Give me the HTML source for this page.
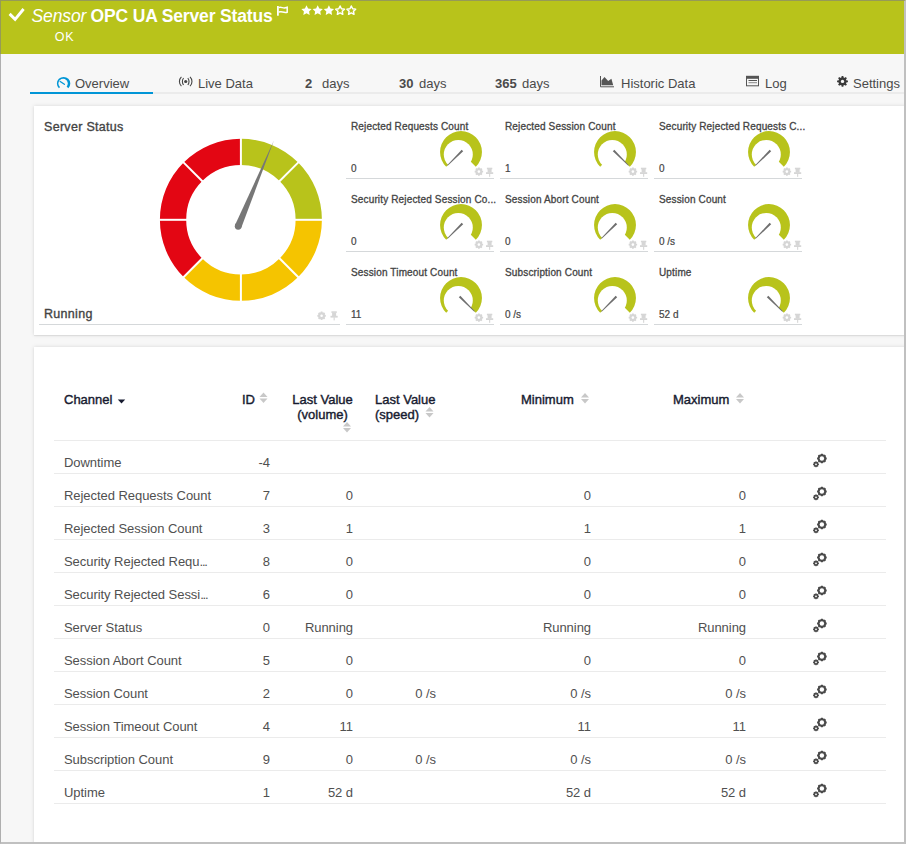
<!DOCTYPE html>
<html><head><meta charset="utf-8">
<style>
*{box-sizing:border-box;margin:0;padding:0}
html,body{width:906px;height:844px;overflow:hidden;background:#f7f7f7;font-family:"Liberation Sans",sans-serif}
.abs{position:absolute;white-space:nowrap}
#hdr{position:absolute;left:0;top:0;width:906px;height:54px;background:#b8c31b}
.w{color:#fff}
.tab{position:absolute;top:77px;font-size:13px;color:#4a4a4a;line-height:14px;white-space:nowrap}
#tabline{position:absolute;left:30px;top:92px;width:876px;height:2px;background:#ebebeb}
#tabsel{position:absolute;left:30px;top:92px;width:123px;height:2px;background:#0095d6}
.panel{position:absolute;background:#fff;box-shadow:0 0 4px rgba(0,0,0,0.13),0 1px 1px rgba(0,0,0,0.06)}
.gt{position:absolute;font-size:10px;color:#444;white-space:nowrap;line-height:12px;-webkit-text-stroke:0.3px #444;letter-spacing:0.15px}
.gv{position:absolute;font-size:10px;color:#444;white-space:nowrap;line-height:12px;-webkit-text-stroke:0.2px #444}
.st{position:absolute;font-size:12.5px;color:#444;white-space:nowrap;line-height:14px;-webkit-text-stroke:0.35px #444}
.th{position:absolute;font-size:13px;color:#171b30;line-height:15px;white-space:nowrap;-webkit-text-stroke:0.4px #171b30}
.td{position:absolute;font-size:13px;color:#505050;line-height:15px;white-space:nowrap;letter-spacing:-0.05px}
.r{text-align:right}
#bord{position:absolute;left:0;top:0;width:906px;height:844px;border-top:1px solid rgba(128,128,128,0.6);border-left:1px solid rgba(128,128,128,0.6);border-right:2px solid #c0c0c0;border-bottom:2px solid #c0c0c0;pointer-events:none}
</style></head><body>
<div id="hdr"></div>
<svg class="abs" style="left:0;top:0" width="30" height="30"><path d="M9.6 13.9L15.1 19.3L23.6 9" fill="none" stroke="#fff" stroke-width="2.9"/></svg>
<div class="abs w" style="left:31.5px;top:5px;font-size:17.5px;font-style:italic;line-height:22px;letter-spacing:-0.1px">Sensor</div>
<div class="abs w" style="left:90.5px;top:5px;font-size:17.5px;font-weight:bold;line-height:22px;letter-spacing:-0.15px">OPC UA Server Status</div>
<div class="abs w" style="left:54.8px;top:30px;font-size:12.5px;line-height:14px;letter-spacing:0.8px">OK</div>

<div id="tabline"></div><div id="tabsel"></div>
<div class="tab" style="left:75px">Overview</div>
<div class="tab" style="left:198px">Live Data</div>
<div class="tab" style="left:305px"><b>2</b></div><div class="tab" style="left:322px">days</div>
<div class="tab" style="left:399px"><b>30</b></div><div class="tab" style="left:419px">days</div>
<div class="tab" style="left:495px"><b>365</b></div><div class="tab" style="left:522px">days</div>
<div class="tab" style="left:621px">Historic Data</div>
<div class="tab" style="left:765px">Log</div>
<div class="tab" style="left:853px">Settings</div>

<div class="panel" style="left:34px;top:106px;width:880px;height:229px"></div>
<div class="panel" style="left:34px;top:347px;width:880px;height:520px"></div>
<div class="st" style="left:44px;top:120px;letter-spacing:0.3px">Server Status</div>
<div class="st" style="left:44px;top:307px;letter-spacing:0.3px">Running</div>
<svg class="abs" style="left:0;top:0" width="906" height="844"><path d="M240.9 138.8A81 81 0 0 1 298.18 162.52L279.58 181.12A54.7 54.7 0 0 0 240.9 165.1Z" fill="#b8c31b"/><path d="M298.18 162.52A81 81 0 0 1 321.9 219.8L295.6 219.8A54.7 54.7 0 0 0 279.58 181.12Z" fill="#b8c31b"/><path d="M321.9 219.8A81 81 0 0 1 298.18 277.08L279.58 258.48A54.7 54.7 0 0 0 295.6 219.8Z" fill="#f5c400"/><path d="M298.18 277.08A81 81 0 0 1 240.9 300.8L240.9 274.5A54.7 54.7 0 0 0 279.58 258.48Z" fill="#f5c400"/><path d="M240.9 300.8A81 81 0 0 1 183.62 277.08L202.22 258.48A54.7 54.7 0 0 0 240.9 274.5Z" fill="#f5c400"/><path d="M183.62 277.08A81 81 0 0 1 159.9 219.8L186.2 219.8A54.7 54.7 0 0 0 202.22 258.48Z" fill="#e30613"/><path d="M159.9 219.8A81 81 0 0 1 183.62 162.52L202.22 181.12A54.7 54.7 0 0 0 186.2 219.8Z" fill="#e30613"/><path d="M183.62 162.52A81 81 0 0 1 240.9 138.8L240.9 165.1A54.7 54.7 0 0 0 202.22 181.12Z" fill="#e30613"/><line x1="240.9" y1="167.1" x2="240.9" y2="136.8" stroke="#fff" stroke-width="2"/><line x1="278.16" y1="182.54" x2="299.59" y2="161.11" stroke="#fff" stroke-width="2"/><line x1="293.6" y1="219.8" x2="323.9" y2="219.8" stroke="#fff" stroke-width="2"/><line x1="278.16" y1="257.06" x2="299.59" y2="278.49" stroke="#fff" stroke-width="2"/><line x1="240.9" y1="272.5" x2="240.9" y2="302.8" stroke="#fff" stroke-width="2"/><line x1="203.64" y1="257.06" x2="182.21" y2="278.49" stroke="#fff" stroke-width="2"/><line x1="188.2" y1="219.8" x2="157.9" y2="219.8" stroke="#fff" stroke-width="2"/><line x1="203.64" y1="182.54" x2="182.21" y2="161.11" stroke="#fff" stroke-width="2"/><path d="M241.35 227.57L273.76 140.87L235.07 224.96Z" fill="#777"/><circle cx="238.21" cy="226.26" r="3.4" fill="#777"/><rect x="39" y="324" width="301" height="1" fill="#d5d8da"/><path d="M320.63 312.59L320.75 311.58L322.45 311.58L322.57 312.59L323.19 312.85L323.98 312.22L325.18 313.42L324.55 314.21L324.81 314.83L325.82 314.95L325.82 316.65L324.81 316.77L324.55 317.39L325.18 318.18L323.98 319.38L323.19 318.75L322.57 319.01L322.45 320.02L320.75 320.02L320.63 319.01L320.01 318.75L319.22 319.38L318.02 318.18L318.65 317.39L318.39 316.77L317.38 316.65L317.38 314.95L318.39 314.83L318.65 314.21L318.02 313.42L319.22 312.22L320.01 312.85Z" fill="#d6d6d6"/><circle cx="321.6" cy="315.8" r="3.35" fill="#d6d6d6"/><circle cx="321.6" cy="315.8" r="1.29" fill="#fff"/><rect x="331.4" y="311.3" width="5.4" height="1.6" fill="#d6d6d6"/><rect x="332.1" y="312.6" width="4" height="3.6" fill="#d6d6d6"/><rect x="330.5" y="315.8" width="7.2" height="1.8" fill="#d6d6d6"/><rect x="333.6" y="317.2" width="1.1" height="3.2" fill="#d6d6d6"/><path d="M461 152L446.19 166.81A20.95 20.95 0 1 1 475.81 166.81Z" fill="#b8c31b"/><circle cx="458.3" cy="154.4" r="14.5" fill="#fff"/><path d="M461.64 149.81L447.18 165.33L447.67 165.82L463.19 151.36Z" fill="#6e6e6e"/><path d="M477.93 168.39L478.05 167.38L479.75 167.38L479.87 168.39L480.49 168.65L481.28 168.02L482.48 169.22L481.85 170.01L482.11 170.63L483.12 170.75L483.12 172.45L482.11 172.57L481.85 173.19L482.48 173.98L481.28 175.18L480.49 174.55L479.87 174.81L479.75 175.82L478.05 175.82L477.93 174.81L477.31 174.55L476.52 175.18L475.32 173.98L475.95 173.19L475.69 172.57L474.68 172.45L474.68 170.75L475.69 170.63L475.95 170.01L475.32 169.22L476.52 168.02L477.31 168.65Z" fill="#d6d6d6"/><circle cx="478.9" cy="171.6" r="3.35" fill="#d6d6d6"/><circle cx="478.9" cy="171.6" r="1.29" fill="#fff"/><rect x="486.9" y="167.7" width="5.4" height="1.6" fill="#d6d6d6"/><rect x="487.6" y="169" width="4" height="3.6" fill="#d6d6d6"/><rect x="486" y="172.2" width="7.2" height="1.8" fill="#d6d6d6"/><rect x="489.1" y="173.6" width="1.1" height="3.2" fill="#d6d6d6"/><rect x="346" y="178" width="148" height="1" fill="#d5d8da"/><path d="M615 152L600.19 166.81A20.95 20.95 0 1 1 629.81 166.81Z" fill="#b8c31b"/><circle cx="612.3" cy="154.4" r="14.5" fill="#fff"/><path d="M612.81 151.36L628.33 165.82L628.82 165.33L614.36 149.81Z" fill="#6e6e6e"/><path d="M631.93 168.39L632.05 167.38L633.75 167.38L633.87 168.39L634.49 168.65L635.28 168.02L636.48 169.22L635.85 170.01L636.11 170.63L637.12 170.75L637.12 172.45L636.11 172.57L635.85 173.19L636.48 173.98L635.28 175.18L634.49 174.55L633.87 174.81L633.75 175.82L632.05 175.82L631.93 174.81L631.31 174.55L630.52 175.18L629.32 173.98L629.95 173.19L629.69 172.57L628.68 172.45L628.68 170.75L629.69 170.63L629.95 170.01L629.32 169.22L630.52 168.02L631.31 168.65Z" fill="#d6d6d6"/><circle cx="632.9" cy="171.6" r="3.35" fill="#d6d6d6"/><circle cx="632.9" cy="171.6" r="1.29" fill="#fff"/><rect x="640.9" y="167.7" width="5.4" height="1.6" fill="#d6d6d6"/><rect x="641.6" y="169" width="4" height="3.6" fill="#d6d6d6"/><rect x="640" y="172.2" width="7.2" height="1.8" fill="#d6d6d6"/><rect x="643.1" y="173.6" width="1.1" height="3.2" fill="#d6d6d6"/><rect x="500" y="178" width="148" height="1" fill="#d5d8da"/><path d="M769 152L754.19 166.81A20.95 20.95 0 1 1 783.81 166.81Z" fill="#b8c31b"/><circle cx="766.3" cy="154.4" r="14.5" fill="#fff"/><path d="M769.64 149.81L755.18 165.33L755.67 165.82L771.19 151.36Z" fill="#6e6e6e"/><path d="M785.93 168.39L786.05 167.38L787.75 167.38L787.87 168.39L788.49 168.65L789.28 168.02L790.48 169.22L789.85 170.01L790.11 170.63L791.12 170.75L791.12 172.45L790.11 172.57L789.85 173.19L790.48 173.98L789.28 175.18L788.49 174.55L787.87 174.81L787.75 175.82L786.05 175.82L785.93 174.81L785.31 174.55L784.52 175.18L783.32 173.98L783.95 173.19L783.69 172.57L782.68 172.45L782.68 170.75L783.69 170.63L783.95 170.01L783.32 169.22L784.52 168.02L785.31 168.65Z" fill="#d6d6d6"/><circle cx="786.9" cy="171.6" r="3.35" fill="#d6d6d6"/><circle cx="786.9" cy="171.6" r="1.29" fill="#fff"/><rect x="794.9" y="167.7" width="5.4" height="1.6" fill="#d6d6d6"/><rect x="795.6" y="169" width="4" height="3.6" fill="#d6d6d6"/><rect x="794" y="172.2" width="7.2" height="1.8" fill="#d6d6d6"/><rect x="797.1" y="173.6" width="1.1" height="3.2" fill="#d6d6d6"/><rect x="654" y="178" width="148" height="1" fill="#d5d8da"/><path d="M461 225L446.19 239.81A20.95 20.95 0 1 1 475.81 239.81Z" fill="#b8c31b"/><circle cx="458.3" cy="227.4" r="14.5" fill="#fff"/><path d="M461.64 222.81L447.18 238.33L447.67 238.82L463.19 224.36Z" fill="#6e6e6e"/><path d="M477.93 241.39L478.05 240.38L479.75 240.38L479.87 241.39L480.49 241.65L481.28 241.02L482.48 242.22L481.85 243.01L482.11 243.63L483.12 243.75L483.12 245.45L482.11 245.57L481.85 246.19L482.48 246.98L481.28 248.18L480.49 247.55L479.87 247.81L479.75 248.82L478.05 248.82L477.93 247.81L477.31 247.55L476.52 248.18L475.32 246.98L475.95 246.19L475.69 245.57L474.68 245.45L474.68 243.75L475.69 243.63L475.95 243.01L475.32 242.22L476.52 241.02L477.31 241.65Z" fill="#d6d6d6"/><circle cx="478.9" cy="244.6" r="3.35" fill="#d6d6d6"/><circle cx="478.9" cy="244.6" r="1.29" fill="#fff"/><rect x="486.9" y="240.7" width="5.4" height="1.6" fill="#d6d6d6"/><rect x="487.6" y="242" width="4" height="3.6" fill="#d6d6d6"/><rect x="486" y="245.2" width="7.2" height="1.8" fill="#d6d6d6"/><rect x="489.1" y="246.6" width="1.1" height="3.2" fill="#d6d6d6"/><rect x="346" y="251" width="148" height="1" fill="#d5d8da"/><path d="M615 225L600.19 239.81A20.95 20.95 0 1 1 629.81 239.81Z" fill="#b8c31b"/><circle cx="612.3" cy="227.4" r="14.5" fill="#fff"/><path d="M615.64 222.81L601.18 238.33L601.67 238.82L617.19 224.36Z" fill="#6e6e6e"/><path d="M631.93 241.39L632.05 240.38L633.75 240.38L633.87 241.39L634.49 241.65L635.28 241.02L636.48 242.22L635.85 243.01L636.11 243.63L637.12 243.75L637.12 245.45L636.11 245.57L635.85 246.19L636.48 246.98L635.28 248.18L634.49 247.55L633.87 247.81L633.75 248.82L632.05 248.82L631.93 247.81L631.31 247.55L630.52 248.18L629.32 246.98L629.95 246.19L629.69 245.57L628.68 245.45L628.68 243.75L629.69 243.63L629.95 243.01L629.32 242.22L630.52 241.02L631.31 241.65Z" fill="#d6d6d6"/><circle cx="632.9" cy="244.6" r="3.35" fill="#d6d6d6"/><circle cx="632.9" cy="244.6" r="1.29" fill="#fff"/><rect x="640.9" y="240.7" width="5.4" height="1.6" fill="#d6d6d6"/><rect x="641.6" y="242" width="4" height="3.6" fill="#d6d6d6"/><rect x="640" y="245.2" width="7.2" height="1.8" fill="#d6d6d6"/><rect x="643.1" y="246.6" width="1.1" height="3.2" fill="#d6d6d6"/><rect x="500" y="251" width="148" height="1" fill="#d5d8da"/><path d="M769 225L754.19 239.81A20.95 20.95 0 1 1 783.81 239.81Z" fill="#b8c31b"/><circle cx="766.3" cy="227.4" r="14.5" fill="#fff"/><path d="M769.64 222.81L755.18 238.33L755.67 238.82L771.19 224.36Z" fill="#6e6e6e"/><path d="M785.93 241.39L786.05 240.38L787.75 240.38L787.87 241.39L788.49 241.65L789.28 241.02L790.48 242.22L789.85 243.01L790.11 243.63L791.12 243.75L791.12 245.45L790.11 245.57L789.85 246.19L790.48 246.98L789.28 248.18L788.49 247.55L787.87 247.81L787.75 248.82L786.05 248.82L785.93 247.81L785.31 247.55L784.52 248.18L783.32 246.98L783.95 246.19L783.69 245.57L782.68 245.45L782.68 243.75L783.69 243.63L783.95 243.01L783.32 242.22L784.52 241.02L785.31 241.65Z" fill="#d6d6d6"/><circle cx="786.9" cy="244.6" r="3.35" fill="#d6d6d6"/><circle cx="786.9" cy="244.6" r="1.29" fill="#fff"/><rect x="794.9" y="240.7" width="5.4" height="1.6" fill="#d6d6d6"/><rect x="795.6" y="242" width="4" height="3.6" fill="#d6d6d6"/><rect x="794" y="245.2" width="7.2" height="1.8" fill="#d6d6d6"/><rect x="797.1" y="246.6" width="1.1" height="3.2" fill="#d6d6d6"/><rect x="654" y="251" width="148" height="1" fill="#d5d8da"/><path d="M461 298L446.19 312.81A20.95 20.95 0 1 1 475.81 312.81Z" fill="#b8c31b"/><circle cx="458.3" cy="300.4" r="14.5" fill="#fff"/><path d="M458.81 297.36L474.33 311.82L474.82 311.33L460.36 295.81Z" fill="#6e6e6e"/><path d="M477.93 314.39L478.05 313.38L479.75 313.38L479.87 314.39L480.49 314.65L481.28 314.02L482.48 315.22L481.85 316.01L482.11 316.63L483.12 316.75L483.12 318.45L482.11 318.57L481.85 319.19L482.48 319.98L481.28 321.18L480.49 320.55L479.87 320.81L479.75 321.82L478.05 321.82L477.93 320.81L477.31 320.55L476.52 321.18L475.32 319.98L475.95 319.19L475.69 318.57L474.68 318.45L474.68 316.75L475.69 316.63L475.95 316.01L475.32 315.22L476.52 314.02L477.31 314.65Z" fill="#d6d6d6"/><circle cx="478.9" cy="317.6" r="3.35" fill="#d6d6d6"/><circle cx="478.9" cy="317.6" r="1.29" fill="#fff"/><rect x="486.9" y="313.7" width="5.4" height="1.6" fill="#d6d6d6"/><rect x="487.6" y="315" width="4" height="3.6" fill="#d6d6d6"/><rect x="486" y="318.2" width="7.2" height="1.8" fill="#d6d6d6"/><rect x="489.1" y="319.6" width="1.1" height="3.2" fill="#d6d6d6"/><rect x="346" y="324" width="148" height="1" fill="#d5d8da"/><path d="M615 298L600.19 312.81A20.95 20.95 0 1 1 629.81 312.81Z" fill="#b8c31b"/><circle cx="612.3" cy="300.4" r="14.5" fill="#fff"/><path d="M615.64 295.81L601.18 311.33L601.67 311.82L617.19 297.36Z" fill="#6e6e6e"/><path d="M631.93 314.39L632.05 313.38L633.75 313.38L633.87 314.39L634.49 314.65L635.28 314.02L636.48 315.22L635.85 316.01L636.11 316.63L637.12 316.75L637.12 318.45L636.11 318.57L635.85 319.19L636.48 319.98L635.28 321.18L634.49 320.55L633.87 320.81L633.75 321.82L632.05 321.82L631.93 320.81L631.31 320.55L630.52 321.18L629.32 319.98L629.95 319.19L629.69 318.57L628.68 318.45L628.68 316.75L629.69 316.63L629.95 316.01L629.32 315.22L630.52 314.02L631.31 314.65Z" fill="#d6d6d6"/><circle cx="632.9" cy="317.6" r="3.35" fill="#d6d6d6"/><circle cx="632.9" cy="317.6" r="1.29" fill="#fff"/><rect x="640.9" y="313.7" width="5.4" height="1.6" fill="#d6d6d6"/><rect x="641.6" y="315" width="4" height="3.6" fill="#d6d6d6"/><rect x="640" y="318.2" width="7.2" height="1.8" fill="#d6d6d6"/><rect x="643.1" y="319.6" width="1.1" height="3.2" fill="#d6d6d6"/><rect x="500" y="324" width="148" height="1" fill="#d5d8da"/><path d="M769 298L754.19 312.81A20.95 20.95 0 1 1 783.81 312.81Z" fill="#b8c31b"/><circle cx="766.3" cy="300.4" r="14.5" fill="#fff"/><path d="M766.81 297.36L782.33 311.82L782.82 311.33L768.36 295.81Z" fill="#6e6e6e"/><path d="M785.93 314.39L786.05 313.38L787.75 313.38L787.87 314.39L788.49 314.65L789.28 314.02L790.48 315.22L789.85 316.01L790.11 316.63L791.12 316.75L791.12 318.45L790.11 318.57L789.85 319.19L790.48 319.98L789.28 321.18L788.49 320.55L787.87 320.81L787.75 321.82L786.05 321.82L785.93 320.81L785.31 320.55L784.52 321.18L783.32 319.98L783.95 319.19L783.69 318.57L782.68 318.45L782.68 316.75L783.69 316.63L783.95 316.01L783.32 315.22L784.52 314.02L785.31 314.65Z" fill="#d6d6d6"/><circle cx="786.9" cy="317.6" r="3.35" fill="#d6d6d6"/><circle cx="786.9" cy="317.6" r="1.29" fill="#fff"/><rect x="794.9" y="313.7" width="5.4" height="1.6" fill="#d6d6d6"/><rect x="795.6" y="315" width="4" height="3.6" fill="#d6d6d6"/><rect x="794" y="318.2" width="7.2" height="1.8" fill="#d6d6d6"/><rect x="797.1" y="319.6" width="1.1" height="3.2" fill="#d6d6d6"/><rect x="654" y="324" width="148" height="1" fill="#d5d8da"/><rect x="54" y="440" width="832" height="1" fill="#ebebeb"/><rect x="54" y="473" width="832" height="1" fill="#ebebeb"/><g transform="translate(813,451)"><path d="M7.81 3.53L8.02 2.68L9.78 2.68L9.99 3.53L10.94 3.92L11.68 3.47L12.93 4.72L12.48 5.46L12.87 6.41L13.72 6.62L13.72 8.38L12.87 8.59L12.48 9.54L12.93 10.28L11.68 11.53L10.94 11.08L9.99 11.47L9.78 12.32L8.02 12.32L7.81 11.47L6.86 11.08L6.12 11.53L4.87 10.28L5.32 9.54L4.93 8.59L4.08 8.38L4.08 6.62L4.93 6.41L5.32 5.46L4.87 4.72L6.12 3.47L6.86 3.92Z" fill="#4a4a4a"/><circle cx="8.9" cy="7.5" r="4.12" fill="#4a4a4a"/><circle cx="8.9" cy="7.5" r="2.21" fill="#fff"/><path d="M2.36 10.99L2.46 10.35L3.54 10.35L3.64 10.99L4.19 11.21L4.7 10.83L5.47 11.6L5.09 12.11L5.31 12.66L5.95 12.76L5.95 13.84L5.31 13.94L5.09 14.49L5.47 15L4.7 15.77L4.19 15.39L3.64 15.61L3.54 16.25L2.46 16.25L2.36 15.61L1.81 15.39L1.3 15.77L0.53 15L0.91 14.49L0.69 13.94L0.05 13.84L0.05 12.76L0.69 12.66L0.91 12.11L0.53 11.6L1.3 10.83L1.81 11.21Z" fill="#4a4a4a"/><circle cx="3" cy="13.3" r="2.4" fill="#4a4a4a"/><circle cx="3" cy="13.3" r="0.9" fill="#fff"/></g><rect x="54" y="506" width="832" height="1" fill="#ebebeb"/><g transform="translate(813,484)"><path d="M7.81 3.53L8.02 2.68L9.78 2.68L9.99 3.53L10.94 3.92L11.68 3.47L12.93 4.72L12.48 5.46L12.87 6.41L13.72 6.62L13.72 8.38L12.87 8.59L12.48 9.54L12.93 10.28L11.68 11.53L10.94 11.08L9.99 11.47L9.78 12.32L8.02 12.32L7.81 11.47L6.86 11.08L6.12 11.53L4.87 10.28L5.32 9.54L4.93 8.59L4.08 8.38L4.08 6.62L4.93 6.41L5.32 5.46L4.87 4.72L6.12 3.47L6.86 3.92Z" fill="#4a4a4a"/><circle cx="8.9" cy="7.5" r="4.12" fill="#4a4a4a"/><circle cx="8.9" cy="7.5" r="2.21" fill="#fff"/><path d="M2.36 10.99L2.46 10.35L3.54 10.35L3.64 10.99L4.19 11.21L4.7 10.83L5.47 11.6L5.09 12.11L5.31 12.66L5.95 12.76L5.95 13.84L5.31 13.94L5.09 14.49L5.47 15L4.7 15.77L4.19 15.39L3.64 15.61L3.54 16.25L2.46 16.25L2.36 15.61L1.81 15.39L1.3 15.77L0.53 15L0.91 14.49L0.69 13.94L0.05 13.84L0.05 12.76L0.69 12.66L0.91 12.11L0.53 11.6L1.3 10.83L1.81 11.21Z" fill="#4a4a4a"/><circle cx="3" cy="13.3" r="2.4" fill="#4a4a4a"/><circle cx="3" cy="13.3" r="0.9" fill="#fff"/></g><rect x="54" y="539" width="832" height="1" fill="#ebebeb"/><g transform="translate(813,517)"><path d="M7.81 3.53L8.02 2.68L9.78 2.68L9.99 3.53L10.94 3.92L11.68 3.47L12.93 4.72L12.48 5.46L12.87 6.41L13.72 6.62L13.72 8.38L12.87 8.59L12.48 9.54L12.93 10.28L11.68 11.53L10.94 11.08L9.99 11.47L9.78 12.32L8.02 12.32L7.81 11.47L6.86 11.08L6.12 11.53L4.87 10.28L5.32 9.54L4.93 8.59L4.08 8.38L4.08 6.62L4.93 6.41L5.32 5.46L4.87 4.72L6.12 3.47L6.86 3.92Z" fill="#4a4a4a"/><circle cx="8.9" cy="7.5" r="4.12" fill="#4a4a4a"/><circle cx="8.9" cy="7.5" r="2.21" fill="#fff"/><path d="M2.36 10.99L2.46 10.35L3.54 10.35L3.64 10.99L4.19 11.21L4.7 10.83L5.47 11.6L5.09 12.11L5.31 12.66L5.95 12.76L5.95 13.84L5.31 13.94L5.09 14.49L5.47 15L4.7 15.77L4.19 15.39L3.64 15.61L3.54 16.25L2.46 16.25L2.36 15.61L1.81 15.39L1.3 15.77L0.53 15L0.91 14.49L0.69 13.94L0.05 13.84L0.05 12.76L0.69 12.66L0.91 12.11L0.53 11.6L1.3 10.83L1.81 11.21Z" fill="#4a4a4a"/><circle cx="3" cy="13.3" r="2.4" fill="#4a4a4a"/><circle cx="3" cy="13.3" r="0.9" fill="#fff"/></g><rect x="54" y="572" width="832" height="1" fill="#ebebeb"/><g transform="translate(813,550)"><path d="M7.81 3.53L8.02 2.68L9.78 2.68L9.99 3.53L10.94 3.92L11.68 3.47L12.93 4.72L12.48 5.46L12.87 6.41L13.72 6.62L13.72 8.38L12.87 8.59L12.48 9.54L12.93 10.28L11.68 11.53L10.94 11.08L9.99 11.47L9.78 12.32L8.02 12.32L7.81 11.47L6.86 11.08L6.12 11.53L4.87 10.28L5.32 9.54L4.93 8.59L4.08 8.38L4.08 6.62L4.93 6.41L5.32 5.46L4.87 4.72L6.12 3.47L6.86 3.92Z" fill="#4a4a4a"/><circle cx="8.9" cy="7.5" r="4.12" fill="#4a4a4a"/><circle cx="8.9" cy="7.5" r="2.21" fill="#fff"/><path d="M2.36 10.99L2.46 10.35L3.54 10.35L3.64 10.99L4.19 11.21L4.7 10.83L5.47 11.6L5.09 12.11L5.31 12.66L5.95 12.76L5.95 13.84L5.31 13.94L5.09 14.49L5.47 15L4.7 15.77L4.19 15.39L3.64 15.61L3.54 16.25L2.46 16.25L2.36 15.61L1.81 15.39L1.3 15.77L0.53 15L0.91 14.49L0.69 13.94L0.05 13.84L0.05 12.76L0.69 12.66L0.91 12.11L0.53 11.6L1.3 10.83L1.81 11.21Z" fill="#4a4a4a"/><circle cx="3" cy="13.3" r="2.4" fill="#4a4a4a"/><circle cx="3" cy="13.3" r="0.9" fill="#fff"/></g><rect x="54" y="605" width="832" height="1" fill="#ebebeb"/><g transform="translate(813,583)"><path d="M7.81 3.53L8.02 2.68L9.78 2.68L9.99 3.53L10.94 3.92L11.68 3.47L12.93 4.72L12.48 5.46L12.87 6.41L13.72 6.62L13.72 8.38L12.87 8.59L12.48 9.54L12.93 10.28L11.68 11.53L10.94 11.08L9.99 11.47L9.78 12.32L8.02 12.32L7.81 11.47L6.86 11.08L6.12 11.53L4.87 10.28L5.32 9.54L4.93 8.59L4.08 8.38L4.08 6.62L4.93 6.41L5.32 5.46L4.87 4.72L6.12 3.47L6.86 3.92Z" fill="#4a4a4a"/><circle cx="8.9" cy="7.5" r="4.12" fill="#4a4a4a"/><circle cx="8.9" cy="7.5" r="2.21" fill="#fff"/><path d="M2.36 10.99L2.46 10.35L3.54 10.35L3.64 10.99L4.19 11.21L4.7 10.83L5.47 11.6L5.09 12.11L5.31 12.66L5.95 12.76L5.95 13.84L5.31 13.94L5.09 14.49L5.47 15L4.7 15.77L4.19 15.39L3.64 15.61L3.54 16.25L2.46 16.25L2.36 15.61L1.81 15.39L1.3 15.77L0.53 15L0.91 14.49L0.69 13.94L0.05 13.84L0.05 12.76L0.69 12.66L0.91 12.11L0.53 11.6L1.3 10.83L1.81 11.21Z" fill="#4a4a4a"/><circle cx="3" cy="13.3" r="2.4" fill="#4a4a4a"/><circle cx="3" cy="13.3" r="0.9" fill="#fff"/></g><rect x="54" y="638" width="832" height="1" fill="#ebebeb"/><g transform="translate(813,616)"><path d="M7.81 3.53L8.02 2.68L9.78 2.68L9.99 3.53L10.94 3.92L11.68 3.47L12.93 4.72L12.48 5.46L12.87 6.41L13.72 6.62L13.72 8.38L12.87 8.59L12.48 9.54L12.93 10.28L11.68 11.53L10.94 11.08L9.99 11.47L9.78 12.32L8.02 12.32L7.81 11.47L6.86 11.08L6.12 11.53L4.87 10.28L5.32 9.54L4.93 8.59L4.08 8.38L4.08 6.62L4.93 6.41L5.32 5.46L4.87 4.72L6.12 3.47L6.86 3.92Z" fill="#4a4a4a"/><circle cx="8.9" cy="7.5" r="4.12" fill="#4a4a4a"/><circle cx="8.9" cy="7.5" r="2.21" fill="#fff"/><path d="M2.36 10.99L2.46 10.35L3.54 10.35L3.64 10.99L4.19 11.21L4.7 10.83L5.47 11.6L5.09 12.11L5.31 12.66L5.95 12.76L5.95 13.84L5.31 13.94L5.09 14.49L5.47 15L4.7 15.77L4.19 15.39L3.64 15.61L3.54 16.25L2.46 16.25L2.36 15.61L1.81 15.39L1.3 15.77L0.53 15L0.91 14.49L0.69 13.94L0.05 13.84L0.05 12.76L0.69 12.66L0.91 12.11L0.53 11.6L1.3 10.83L1.81 11.21Z" fill="#4a4a4a"/><circle cx="3" cy="13.3" r="2.4" fill="#4a4a4a"/><circle cx="3" cy="13.3" r="0.9" fill="#fff"/></g><rect x="54" y="671" width="832" height="1" fill="#ebebeb"/><g transform="translate(813,649)"><path d="M7.81 3.53L8.02 2.68L9.78 2.68L9.99 3.53L10.94 3.92L11.68 3.47L12.93 4.72L12.48 5.46L12.87 6.41L13.72 6.62L13.72 8.38L12.87 8.59L12.48 9.54L12.93 10.28L11.68 11.53L10.94 11.08L9.99 11.47L9.78 12.32L8.02 12.32L7.81 11.47L6.86 11.08L6.12 11.53L4.87 10.28L5.32 9.54L4.93 8.59L4.08 8.38L4.08 6.62L4.93 6.41L5.32 5.46L4.87 4.72L6.12 3.47L6.86 3.92Z" fill="#4a4a4a"/><circle cx="8.9" cy="7.5" r="4.12" fill="#4a4a4a"/><circle cx="8.9" cy="7.5" r="2.21" fill="#fff"/><path d="M2.36 10.99L2.46 10.35L3.54 10.35L3.64 10.99L4.19 11.21L4.7 10.83L5.47 11.6L5.09 12.11L5.31 12.66L5.95 12.76L5.95 13.84L5.31 13.94L5.09 14.49L5.47 15L4.7 15.77L4.19 15.39L3.64 15.61L3.54 16.25L2.46 16.25L2.36 15.61L1.81 15.39L1.3 15.77L0.53 15L0.91 14.49L0.69 13.94L0.05 13.84L0.05 12.76L0.69 12.66L0.91 12.11L0.53 11.6L1.3 10.83L1.81 11.21Z" fill="#4a4a4a"/><circle cx="3" cy="13.3" r="2.4" fill="#4a4a4a"/><circle cx="3" cy="13.3" r="0.9" fill="#fff"/></g><rect x="54" y="704" width="832" height="1" fill="#ebebeb"/><g transform="translate(813,682)"><path d="M7.81 3.53L8.02 2.68L9.78 2.68L9.99 3.53L10.94 3.92L11.68 3.47L12.93 4.72L12.48 5.46L12.87 6.41L13.72 6.62L13.72 8.38L12.87 8.59L12.48 9.54L12.93 10.28L11.68 11.53L10.94 11.08L9.99 11.47L9.78 12.32L8.02 12.32L7.81 11.47L6.86 11.08L6.12 11.53L4.87 10.28L5.32 9.54L4.93 8.59L4.08 8.38L4.08 6.62L4.93 6.41L5.32 5.46L4.87 4.72L6.12 3.47L6.86 3.92Z" fill="#4a4a4a"/><circle cx="8.9" cy="7.5" r="4.12" fill="#4a4a4a"/><circle cx="8.9" cy="7.5" r="2.21" fill="#fff"/><path d="M2.36 10.99L2.46 10.35L3.54 10.35L3.64 10.99L4.19 11.21L4.7 10.83L5.47 11.6L5.09 12.11L5.31 12.66L5.95 12.76L5.95 13.84L5.31 13.94L5.09 14.49L5.47 15L4.7 15.77L4.19 15.39L3.64 15.61L3.54 16.25L2.46 16.25L2.36 15.61L1.81 15.39L1.3 15.77L0.53 15L0.91 14.49L0.69 13.94L0.05 13.84L0.05 12.76L0.69 12.66L0.91 12.11L0.53 11.6L1.3 10.83L1.81 11.21Z" fill="#4a4a4a"/><circle cx="3" cy="13.3" r="2.4" fill="#4a4a4a"/><circle cx="3" cy="13.3" r="0.9" fill="#fff"/></g><rect x="54" y="737" width="832" height="1" fill="#ebebeb"/><g transform="translate(813,715)"><path d="M7.81 3.53L8.02 2.68L9.78 2.68L9.99 3.53L10.94 3.92L11.68 3.47L12.93 4.72L12.48 5.46L12.87 6.41L13.72 6.62L13.72 8.38L12.87 8.59L12.48 9.54L12.93 10.28L11.68 11.53L10.94 11.08L9.99 11.47L9.78 12.32L8.02 12.32L7.81 11.47L6.86 11.08L6.12 11.53L4.87 10.28L5.32 9.54L4.93 8.59L4.08 8.38L4.08 6.62L4.93 6.41L5.32 5.46L4.87 4.72L6.12 3.47L6.86 3.92Z" fill="#4a4a4a"/><circle cx="8.9" cy="7.5" r="4.12" fill="#4a4a4a"/><circle cx="8.9" cy="7.5" r="2.21" fill="#fff"/><path d="M2.36 10.99L2.46 10.35L3.54 10.35L3.64 10.99L4.19 11.21L4.7 10.83L5.47 11.6L5.09 12.11L5.31 12.66L5.95 12.76L5.95 13.84L5.31 13.94L5.09 14.49L5.47 15L4.7 15.77L4.19 15.39L3.64 15.61L3.54 16.25L2.46 16.25L2.36 15.61L1.81 15.39L1.3 15.77L0.53 15L0.91 14.49L0.69 13.94L0.05 13.84L0.05 12.76L0.69 12.66L0.91 12.11L0.53 11.6L1.3 10.83L1.81 11.21Z" fill="#4a4a4a"/><circle cx="3" cy="13.3" r="2.4" fill="#4a4a4a"/><circle cx="3" cy="13.3" r="0.9" fill="#fff"/></g><rect x="54" y="770" width="832" height="1" fill="#ebebeb"/><g transform="translate(813,748)"><path d="M7.81 3.53L8.02 2.68L9.78 2.68L9.99 3.53L10.94 3.92L11.68 3.47L12.93 4.72L12.48 5.46L12.87 6.41L13.72 6.62L13.72 8.38L12.87 8.59L12.48 9.54L12.93 10.28L11.68 11.53L10.94 11.08L9.99 11.47L9.78 12.32L8.02 12.32L7.81 11.47L6.86 11.08L6.12 11.53L4.87 10.28L5.32 9.54L4.93 8.59L4.08 8.38L4.08 6.62L4.93 6.41L5.32 5.46L4.87 4.72L6.12 3.47L6.86 3.92Z" fill="#4a4a4a"/><circle cx="8.9" cy="7.5" r="4.12" fill="#4a4a4a"/><circle cx="8.9" cy="7.5" r="2.21" fill="#fff"/><path d="M2.36 10.99L2.46 10.35L3.54 10.35L3.64 10.99L4.19 11.21L4.7 10.83L5.47 11.6L5.09 12.11L5.31 12.66L5.95 12.76L5.95 13.84L5.31 13.94L5.09 14.49L5.47 15L4.7 15.77L4.19 15.39L3.64 15.61L3.54 16.25L2.46 16.25L2.36 15.61L1.81 15.39L1.3 15.77L0.53 15L0.91 14.49L0.69 13.94L0.05 13.84L0.05 12.76L0.69 12.66L0.91 12.11L0.53 11.6L1.3 10.83L1.81 11.21Z" fill="#4a4a4a"/><circle cx="3" cy="13.3" r="2.4" fill="#4a4a4a"/><circle cx="3" cy="13.3" r="0.9" fill="#fff"/></g><rect x="54" y="803" width="832" height="1" fill="#ebebeb"/><g transform="translate(813,781)"><path d="M7.81 3.53L8.02 2.68L9.78 2.68L9.99 3.53L10.94 3.92L11.68 3.47L12.93 4.72L12.48 5.46L12.87 6.41L13.72 6.62L13.72 8.38L12.87 8.59L12.48 9.54L12.93 10.28L11.68 11.53L10.94 11.08L9.99 11.47L9.78 12.32L8.02 12.32L7.81 11.47L6.86 11.08L6.12 11.53L4.87 10.28L5.32 9.54L4.93 8.59L4.08 8.38L4.08 6.62L4.93 6.41L5.32 5.46L4.87 4.72L6.12 3.47L6.86 3.92Z" fill="#4a4a4a"/><circle cx="8.9" cy="7.5" r="4.12" fill="#4a4a4a"/><circle cx="8.9" cy="7.5" r="2.21" fill="#fff"/><path d="M2.36 10.99L2.46 10.35L3.54 10.35L3.64 10.99L4.19 11.21L4.7 10.83L5.47 11.6L5.09 12.11L5.31 12.66L5.95 12.76L5.95 13.84L5.31 13.94L5.09 14.49L5.47 15L4.7 15.77L4.19 15.39L3.64 15.61L3.54 16.25L2.46 16.25L2.36 15.61L1.81 15.39L1.3 15.77L0.53 15L0.91 14.49L0.69 13.94L0.05 13.84L0.05 12.76L0.69 12.66L0.91 12.11L0.53 11.6L1.3 10.83L1.81 11.21Z" fill="#4a4a4a"/><circle cx="3" cy="13.3" r="2.4" fill="#4a4a4a"/><circle cx="3" cy="13.3" r="0.9" fill="#fff"/></g><path d="M117.8 399.6L125.2 399.6L121.5 403.6Z" fill="#171b30"/><path d="M259.5 397L263.5 392.5L267.5 397Z" fill="#c8c8c8"/><path d="M259.5 398.5L263.5 403L267.5 398.5Z" fill="#c8c8c8"/><path d="M343 426.5L347 422L351 426.5Z" fill="#c8c8c8"/><path d="M343 428L347 432.5L351 428Z" fill="#c8c8c8"/><path d="M425.5 411.5L429.5 407L433.5 411.5Z" fill="#c8c8c8"/><path d="M425.5 413L429.5 417.5L433.5 413Z" fill="#c8c8c8"/><path d="M581 397.5L585 393L589 397.5Z" fill="#c8c8c8"/><path d="M581 399L585 403.5L589 399Z" fill="#c8c8c8"/><path d="M736 397.5L740 393L744 397.5Z" fill="#c8c8c8"/><path d="M736 399L740 403.5L744 399Z" fill="#c8c8c8"/><path d="M306.5 5.2L308.09 8.42L311.64 8.93L309.07 11.43L309.67 14.97L306.5 13.3L303.33 14.97L303.93 11.43L301.36 8.93L304.91 8.42Z" fill="#fff"/><path d="M317.7 5.2L319.29 8.42L322.84 8.93L320.27 11.43L320.87 14.97L317.7 13.3L314.53 14.97L315.13 11.43L312.56 8.93L316.11 8.42Z" fill="#fff"/><path d="M328.9 5.2L330.49 8.42L334.04 8.93L331.47 11.43L332.07 14.97L328.9 13.3L325.73 14.97L326.33 11.43L323.76 8.93L327.31 8.42Z" fill="#fff"/><path d="M340.1 6L341.45 8.74L344.47 9.18L342.29 11.31L342.8 14.32L340.1 12.9L337.4 14.32L337.91 11.31L335.73 9.18L338.75 8.74Z" fill="none" stroke="#fff" stroke-width="1.5" stroke-linejoin="round"/><path d="M351.3 6L352.65 8.74L355.67 9.18L353.49 11.31L354 14.32L351.3 12.9L348.6 14.32L349.11 11.31L346.93 9.18L349.95 8.74Z" fill="none" stroke="#fff" stroke-width="1.5" stroke-linejoin="round"/><rect x="277" y="6" width="1.8" height="9.7" fill="#fff"/><path d="M278.6 7.7C281 6.5 283.2 8.6 285.4 7.7L287.2 7.2L287.2 12.3C285 13 283 11.2 278.6 12.1" fill="none" stroke="#fff" stroke-width="1.5"/><path d="M63.6 83.6L58.86 88.34A6.7 6.7 0 1 1 68.34 88.34Z" fill="#0096d6"/><circle cx="63.1" cy="83.5" r="4.7" fill="#f7f7f7"/><path d="M60.2 81.5L64.4 84.3" stroke="#0096d6" stroke-width="1.3" stroke-linecap="round"/><circle cx="185.7" cy="81.5" r="1.6" fill="#444"/><path d="M183.6 78.2A3.2 4.2 0 0 0 183.6 84.8M187.8 78.2A3.2 4.2 0 0 1 187.8 84.8" fill="none" stroke="#444" stroke-width="1.1"/><path d="M181.4 76.8A5.2 6 0 0 0 181.4 86.2M190 76.8A5.2 6 0 0 1 190 86.2" fill="none" stroke="#444" stroke-width="1.1"/><path d="M600.5 76V86.8H614" fill="none" stroke="#555" stroke-width="1"/><path d="M601.5 85.2L601.5 80.5L604.5 77L608.2 81L611.4 78.8L613.2 85.2Z" fill="#555"/><rect x="746.5" y="76.3" width="12" height="9.5" fill="none" stroke="#555" stroke-width="1"/><rect x="746" y="76" width="13" height="2.8" fill="#555"/><rect x="748.5" y="80" width="8.5" height="1" fill="#555"/><rect x="748.5" y="82.2" width="8.5" height="1" fill="#888"/><path d="M841.55 77.56L841.6 75.97L843.4 75.97L843.45 77.56L844.54 78.01L845.7 76.93L846.97 78.2L845.89 79.36L846.34 80.45L847.93 80.5L847.93 82.3L846.34 82.35L845.89 83.44L846.97 84.6L845.7 85.87L844.54 84.79L843.45 85.24L843.4 86.83L841.6 86.83L841.55 85.24L840.46 84.79L839.3 85.87L838.03 84.6L839.11 83.44L838.66 82.35L837.07 82.3L837.07 80.5L838.66 80.45L839.11 79.36L838.03 78.2L839.3 76.93L840.46 78.01Z" fill="#3a3a3a"/><circle cx="842.5" cy="81.4" r="3.96" fill="#3a3a3a"/><circle cx="842.5" cy="81.4" r="1.65" fill="#f7f7f7"/></svg>
<div class="gt" style="left:351px;top:121px">Rejected Requests Count</div>
<div class="gv" style="left:351px;top:163px">0</div>
<div class="gt" style="left:505px;top:121px">Rejected Session Count</div>
<div class="gv" style="left:505px;top:163px">1</div>
<div class="gt" style="left:659px;top:121px">Security Rejected Requests C...</div>
<div class="gv" style="left:659px;top:163px">0</div>
<div class="gt" style="left:351px;top:194px">Security Rejected Session Co...</div>
<div class="gv" style="left:351px;top:236px">0</div>
<div class="gt" style="left:505px;top:194px">Session Abort Count</div>
<div class="gv" style="left:505px;top:236px">0</div>
<div class="gt" style="left:659px;top:194px">Session Count</div>
<div class="gv" style="left:659px;top:236px">0 /s</div>
<div class="gt" style="left:351px;top:267px">Session Timeout Count</div>
<div class="gv" style="left:351px;top:309px">11</div>
<div class="gt" style="left:505px;top:267px">Subscription Count</div>
<div class="gv" style="left:505px;top:309px">0 /s</div>
<div class="gt" style="left:659px;top:267px">Uptime</div>
<div class="gv" style="left:659px;top:309px">52 d</div>
<div class="td" style="left:64px;top:455px">Downtime</div>
<div class="td r" style="right:636px;top:455px">-4</div>
<div class="td" style="left:64px;top:488px">Rejected Requests Count</div>
<div class="td r" style="right:636px;top:488px">7</div>
<div class="td r" style="right:553px;top:488px">0</div>
<div class="td r" style="right:315px;top:488px">0</div>
<div class="td r" style="right:160px;top:488px">0</div>
<div class="td" style="left:64px;top:521px">Rejected Session Count</div>
<div class="td r" style="right:636px;top:521px">3</div>
<div class="td r" style="right:553px;top:521px">1</div>
<div class="td r" style="right:315px;top:521px">1</div>
<div class="td r" style="right:160px;top:521px">1</div>
<div class="td" style="left:64px;top:554px">Security Rejected Requ<span style="letter-spacing:-1.2px">...</span></div>
<div class="td r" style="right:636px;top:554px">8</div>
<div class="td r" style="right:553px;top:554px">0</div>
<div class="td r" style="right:315px;top:554px">0</div>
<div class="td r" style="right:160px;top:554px">0</div>
<div class="td" style="left:64px;top:587px">Security Rejected Sessi<span style="letter-spacing:-1.2px">...</span></div>
<div class="td r" style="right:636px;top:587px">6</div>
<div class="td r" style="right:553px;top:587px">0</div>
<div class="td r" style="right:315px;top:587px">0</div>
<div class="td r" style="right:160px;top:587px">0</div>
<div class="td" style="left:64px;top:620px">Server Status</div>
<div class="td r" style="right:636px;top:620px">0</div>
<div class="td r" style="right:553px;top:620px">Running</div>
<div class="td r" style="right:315px;top:620px">Running</div>
<div class="td r" style="right:160px;top:620px">Running</div>
<div class="td" style="left:64px;top:653px">Session Abort Count</div>
<div class="td r" style="right:636px;top:653px">5</div>
<div class="td r" style="right:553px;top:653px">0</div>
<div class="td r" style="right:315px;top:653px">0</div>
<div class="td r" style="right:160px;top:653px">0</div>
<div class="td" style="left:64px;top:686px">Session Count</div>
<div class="td r" style="right:636px;top:686px">2</div>
<div class="td r" style="right:553px;top:686px">0</div>
<div class="td r" style="right:470px;top:686px">0 /s</div>
<div class="td r" style="right:315px;top:686px">0 /s</div>
<div class="td r" style="right:160px;top:686px">0 /s</div>
<div class="td" style="left:64px;top:719px">Session Timeout Count</div>
<div class="td r" style="right:636px;top:719px">4</div>
<div class="td r" style="right:553px;top:719px">11</div>
<div class="td r" style="right:315px;top:719px">11</div>
<div class="td r" style="right:160px;top:719px">11</div>
<div class="td" style="left:64px;top:752px">Subscription Count</div>
<div class="td r" style="right:636px;top:752px">9</div>
<div class="td r" style="right:553px;top:752px">0</div>
<div class="td r" style="right:470px;top:752px">0 /s</div>
<div class="td r" style="right:315px;top:752px">0 /s</div>
<div class="td r" style="right:160px;top:752px">0 /s</div>
<div class="td" style="left:64px;top:785px">Uptime</div>
<div class="td r" style="right:636px;top:785px">1</div>
<div class="td r" style="right:553px;top:785px">52 d</div>
<div class="td r" style="right:315px;top:785px">52 d</div>
<div class="td r" style="right:160px;top:785px">52 d</div>
<div class="th" style="left:64px;top:392px">Channel</div>
<div class="th" style="left:242px;top:392px">ID</div>
<div class="th" style="left:285px;top:392px;width:75px;text-align:center">Last Value<br>(volume)</div>
<div class="th" style="left:375px;top:392px">Last Value<br>(speed)</div>
<div class="th" style="left:521px;top:392px">Minimum</div>
<div class="th" style="left:673px;top:392px">Maximum</div>
<div id="bord"></div>
</body></html>
